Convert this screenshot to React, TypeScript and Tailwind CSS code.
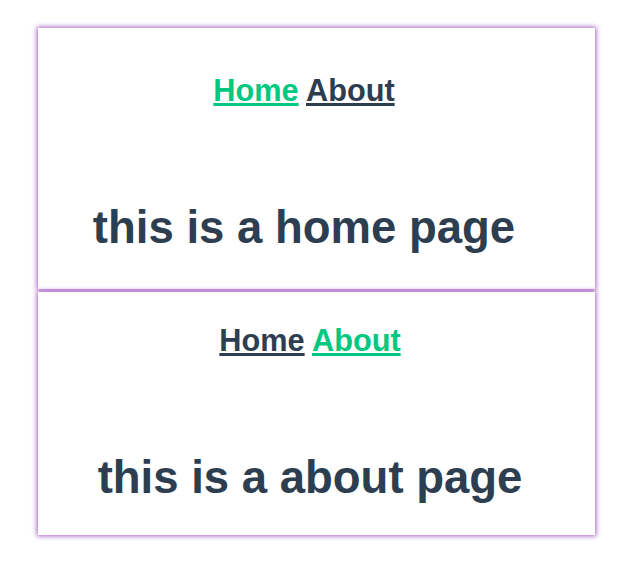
const pages = [
  { active: "home", label: "this is a home page", pad: "pt-[45px] pb-[35px] pr-[25px]" },
  { active: "about", label: "this is a about page", pad: "pt-[31px] pb-[31px] pr-[13px]" },
];

export default function App() {
  return (
    <div
      className="min-h-[569px] bg-white pt-[28px] pl-[38px]"
      style={{ fontFamily: '"Liberation Sans", Arial, sans-serif' }}
    >
      <div className="flex w-[557px] flex-col gap-[3px]">
        {pages.map((page) => (
          <div
            key={page.active}
            className={`flex flex-col items-center bg-white text-[#2c3e50] shadow-[0_0_5px_1px_#a35cc0] ${page.pad}`}
          >
            <nav className="text-[30.7px] font-bold leading-[36px]">
              <a
                href="#"
                className={`underline ${page.active === "home" ? "text-[#00c880]" : "text-[#2c3e50]"}`}
              >
                Home
              </a>{" "}
              <a
                href="#"
                className={`underline ${page.active === "about" ? "text-[#00c880]" : "text-[#2c3e50]"}`}
              >
                About
              </a>
            </nav>
            <h1 className="mt-[93px] text-[45.5px] font-bold leading-[52px]">{page.label}</h1>
          </div>
        ))}
      </div>
    </div>
  );
}
